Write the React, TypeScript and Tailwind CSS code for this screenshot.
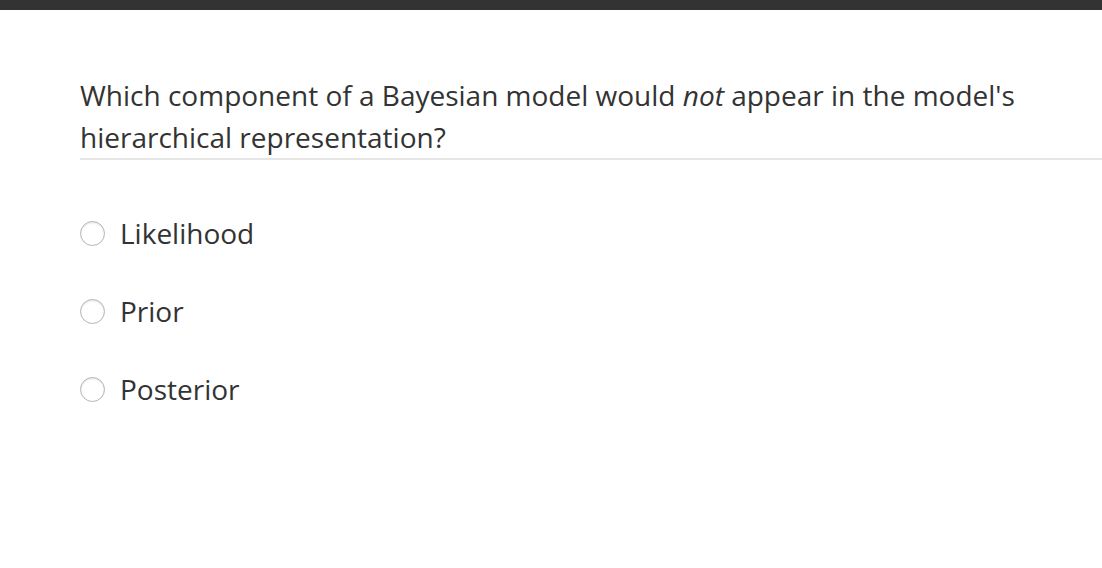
export default function App() {
  const options = ["Likelihood", "Prior", "Posterior"];
  return (
    <div className="min-h-[568px] bg-white" style={{ fontFamily: '"Open Sans", sans-serif' }}>
      <div className="h-[10px] bg-[#333333]" />
      <div className="pl-[80px] pt-[64px]">
        <div className="border-b-2 border-[#e5e5e5] text-[28px] leading-[42px] text-[#333333]">
          <p>
            Which component of a Bayesian model would <em>not</em> appear in the model's
            <br />
            hierarchical representation?
          </p>
        </div>
        <div className="flex flex-col gap-[42px] pt-[55px]">
          {options.map((o) => (
            <label key={o} className="flex h-[36px] items-center gap-[15px] text-[28px] text-[#333333]">
              <span className="h-[25px] w-[25px] rounded-full border border-[#b5b5b5] bg-white shadow-[inset_0_1px_2px_rgba(0,0,0,0.12)]" />
              {o}
            </label>
          ))}
        </div>
      </div>
    </div>
  );
}
